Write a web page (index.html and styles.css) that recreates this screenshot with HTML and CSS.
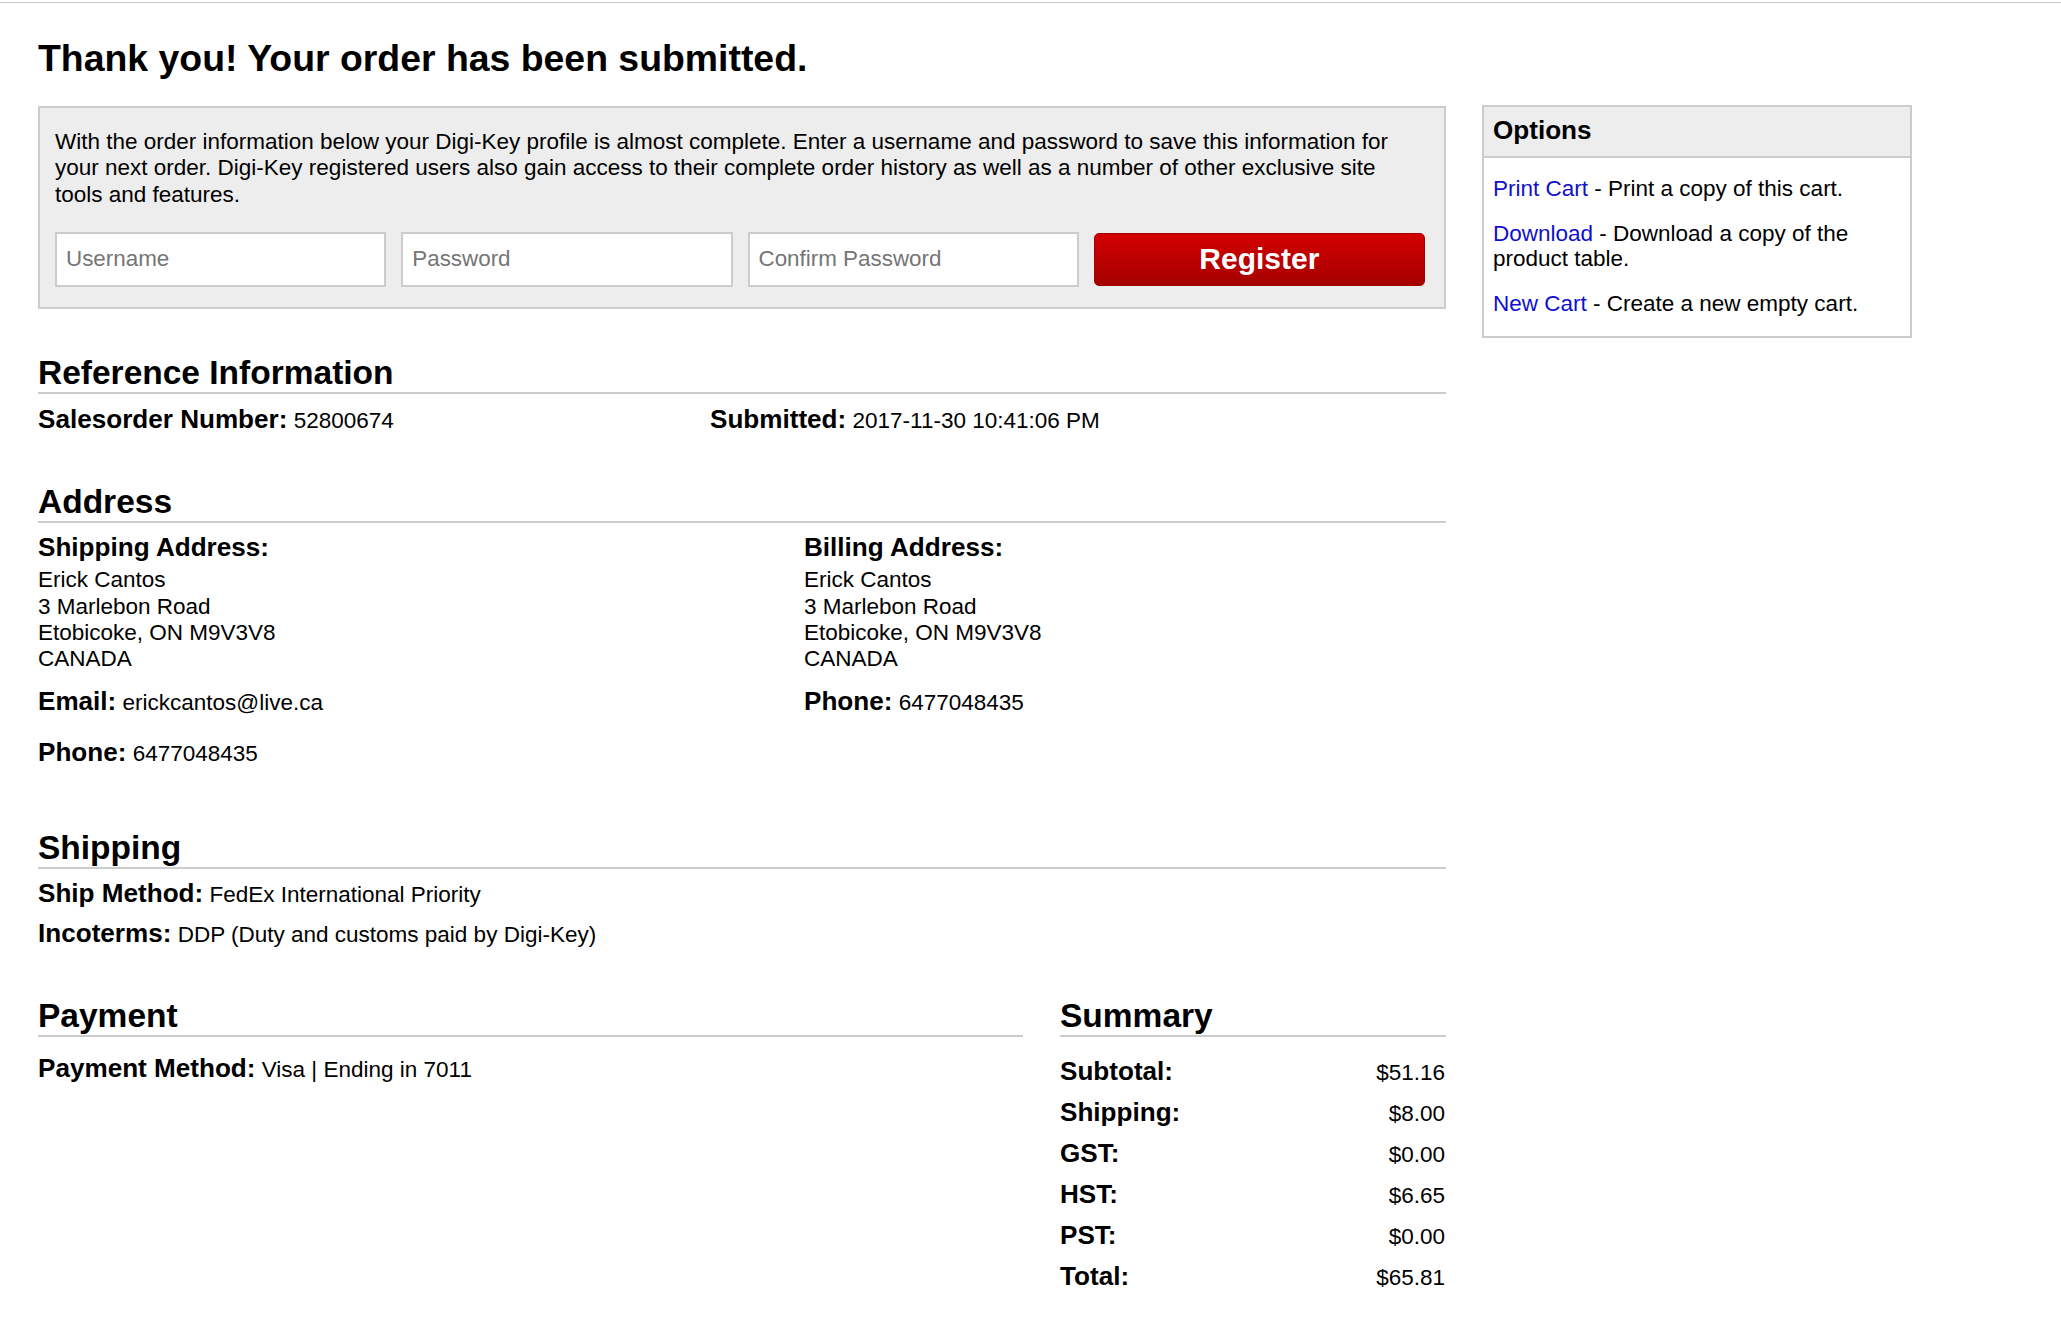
FILE: index.html
```html
<!DOCTYPE html>
<html lang="en">
<head>
<meta charset="utf-8">
<title>Order Submitted</title>
<link rel="stylesheet" href="styles.css">
</head>
<body>
<div class="topbar"></div>
<div class="page">
  <h1 class="title">Thank you! Your order has been submitted.</h1>
  <div class="layout">
    <main class="main">
      <section class="register">
        <p class="register-text">With the order information below your Digi-Key profile is almost complete. Enter a username and password to save this information for your next order. Digi-Key registered users also gain access to their complete order history as well as a number of other exclusive site tools and features.</p>
        <form class="register-form">
          <input class="text-input" type="text" placeholder="Username">
          <input class="text-input" type="password" placeholder="Password">
          <input class="text-input" type="password" placeholder="Confirm Password">
          <button class="btn-register" type="button">Register</button>
        </form>
      </section>

      <section class="section section-ref">
        <h2 class="section-title">Reference Information</h2>
        <div class="ref-grid">
          <div class="row"><span class="label">Salesorder Number:</span> 52800674</div>
          <div class="row"><span class="label">Submitted:</span> 2017-11-30 10:41:06 PM</div>
        </div>
      </section>

      <section class="section section-address">
        <h2 class="section-title">Address</h2>
        <div class="addr-grid">
          <div class="addr-col">
            <div class="addr-head">Shipping Address:</div>
            <div class="addr-lines">Erick Cantos<br>3 Marlebon Road<br>Etobicoke, ON M9V3V8<br>CANADA</div>
            <div class="row addr-row"><span class="label">Email:</span> erickcantos@live.ca</div>
            <div class="row addr-row"><span class="label">Phone:</span> 6477048435</div>
          </div>
          <div class="addr-col">
            <div class="addr-head">Billing Address:</div>
            <div class="addr-lines">Erick Cantos<br>3 Marlebon Road<br>Etobicoke, ON M9V3V8<br>CANADA</div>
            <div class="row addr-row"><span class="label">Phone:</span> 6477048435</div>
          </div>
        </div>
      </section>

      <section class="section">
        <h2 class="section-title">Shipping</h2>
        <div class="row ship-row"><span class="label">Ship Method:</span> FedEx International Priority</div>
        <div class="row ship-row ship-row-next"><span class="label">Incoterms:</span> DDP (Duty and customs paid by Digi-Key)</div>
      </section>

      <div class="section bottom-grid">
        <section class="payment">
          <h2 class="section-title">Payment</h2>
          <div class="row pay-row"><span class="label">Payment Method:</span> Visa | Ending in 7011</div>
        </section>
        <section class="summary">
          <h2 class="section-title">Summary</h2>
          <div class="sum-list">
            <div class="sum-row"><span class="label">Subtotal:</span><span class="amount">$51.16</span></div>
            <div class="sum-row"><span class="label">Shipping:</span><span class="amount">$8.00</span></div>
            <div class="sum-row"><span class="label">GST:</span><span class="amount">$0.00</span></div>
            <div class="sum-row"><span class="label">HST:</span><span class="amount">$6.65</span></div>
            <div class="sum-row"><span class="label">PST:</span><span class="amount">$0.00</span></div>
            <div class="sum-row"><span class="label">Total:</span><span class="amount">$65.81</span></div>
          </div>
        </section>
      </div>
    </main>

    <aside class="options">
      <div class="options-head">Options</div>
      <div class="options-body">
        <p class="opt"><a class="opt-link" href="#">Print Cart</a> - Print a copy of this cart.</p>
        <p class="opt"><a class="opt-link" href="#">Download</a> - Download a copy of the product table.</p>
        <p class="opt"><a class="opt-link" href="#">New Cart</a> - Create a new empty cart.</p>
      </div>
    </aside>
  </div>
</div>
</body>
</html>
```

FILE: styles.css
```css
html, body {
  margin: 0;
  padding: 0;
  background: #ffffff;
}

body {
  font-family: "Liberation Sans", Arial, sans-serif;
  font-size: 22.5px;
  color: #000;
}

.topbar {
  margin-top: 2px;
  border-top: 1px solid #c8c8c8;
}

.page {
  padding: 34px 0 0 38px;
}

.title {
  margin: 0 0 26px;
  font-size: 37.4px;
  line-height: 43px;
  font-weight: bold;
}

.layout {
  display: grid;
  grid-template-columns: 1408px 430px;
  column-gap: 36px;
  align-items: start;
}

/* Register box */
.register {
  background: #ededed;
  border: 2px solid #cccccc;
  padding: 21px 19px 20.5px 15px;
}

.register-text {
  margin: 0 20px 24px 0;
  line-height: 26.3px;
}

.register-form {
  display: grid;
  grid-template-columns: repeat(4, 1fr);
  column-gap: 15px;
  margin: 0;
}

.text-input {
  box-sizing: border-box;
  height: 55px;
  border: 2px solid #cccccc;
  background: #fff;
  padding: 0 9px;
  font-family: "Liberation Sans", Arial, sans-serif;
  font-size: 22.4px;
  color: #000;
  outline: none;
  min-width: 0;
}

.text-input::placeholder {
  color: #757575;
}

.btn-register {
  box-sizing: border-box;
  height: 53px;
  margin-top: 1px;
  border: 1px solid #a30000;
  border-radius: 5px;
  background: linear-gradient(#d40000, #a50000);
  color: #fff;
  font-family: "Liberation Sans", Arial, sans-serif;
  font-size: 30px;
  font-weight: bold;
  cursor: pointer;
}

/* Sections */
.section {
  margin-top: 50px;
}

.section-ref {
  margin-top: 48px;
}

.section-address {
  padding-bottom: 13px;
}

.section-title {
  margin: 0;
  font-size: 33.5px;
  line-height: 32px;
  font-weight: bold;
  padding-bottom: 3px;
  border-bottom: 2px solid #cccccc;
}

.row {
  line-height: 30px;
}

.label {
  font-size: 26.1px;
  font-weight: bold;
  line-height: 1;
}

.ref-grid {
  display: grid;
  grid-template-columns: 672px 1fr;
  margin-top: 11.5px;
}

.addr-grid {
  display: grid;
  grid-template-columns: 766px 1fr;
  margin-top: 9.6px;
}

.addr-head {
  font-size: 26.1px;
  font-weight: bold;
  line-height: 30px;
}

.addr-lines {
  margin-top: 4.8px;
  line-height: 26.3px;
}

.addr-row {
  margin-top: 16px;
}

.addr-row + .addr-row {
  margin-top: 21px;
}

.ship-row {
  margin-top: 11px;
}

.ship-row-next {
  margin-top: 10px;
}

.bottom-grid {
  display: grid;
  grid-template-columns: 985px 1fr;
  column-gap: 37px;
}

.pay-row {
  margin-top: 17.3px;
}

.sum-list {
  margin-top: 15px;
}

.sum-row {
  display: flex;
  justify-content: space-between;
  align-items: baseline;
  line-height: 41px;
}

.amount {
  padding-right: 1px;
}

/* Options */
.options {
  border: 2px solid #cccccc;
  margin-top: -1px;
}

.options-head {
  background: #ededed;
  border-bottom: 2px solid #cccccc;
  font-size: 26.1px;
  font-weight: bold;
  line-height: 46px;
  padding: 0 9px 3px;
}

.options-body {
  padding: 18px 9px 20px;
}

.opt {
  margin: 0 0 20px;
  line-height: 25px;
}

.opt:last-child {
  margin-bottom: 0;
}

.opt-link {
  color: #1010cc;
  text-decoration: none;
}
```
